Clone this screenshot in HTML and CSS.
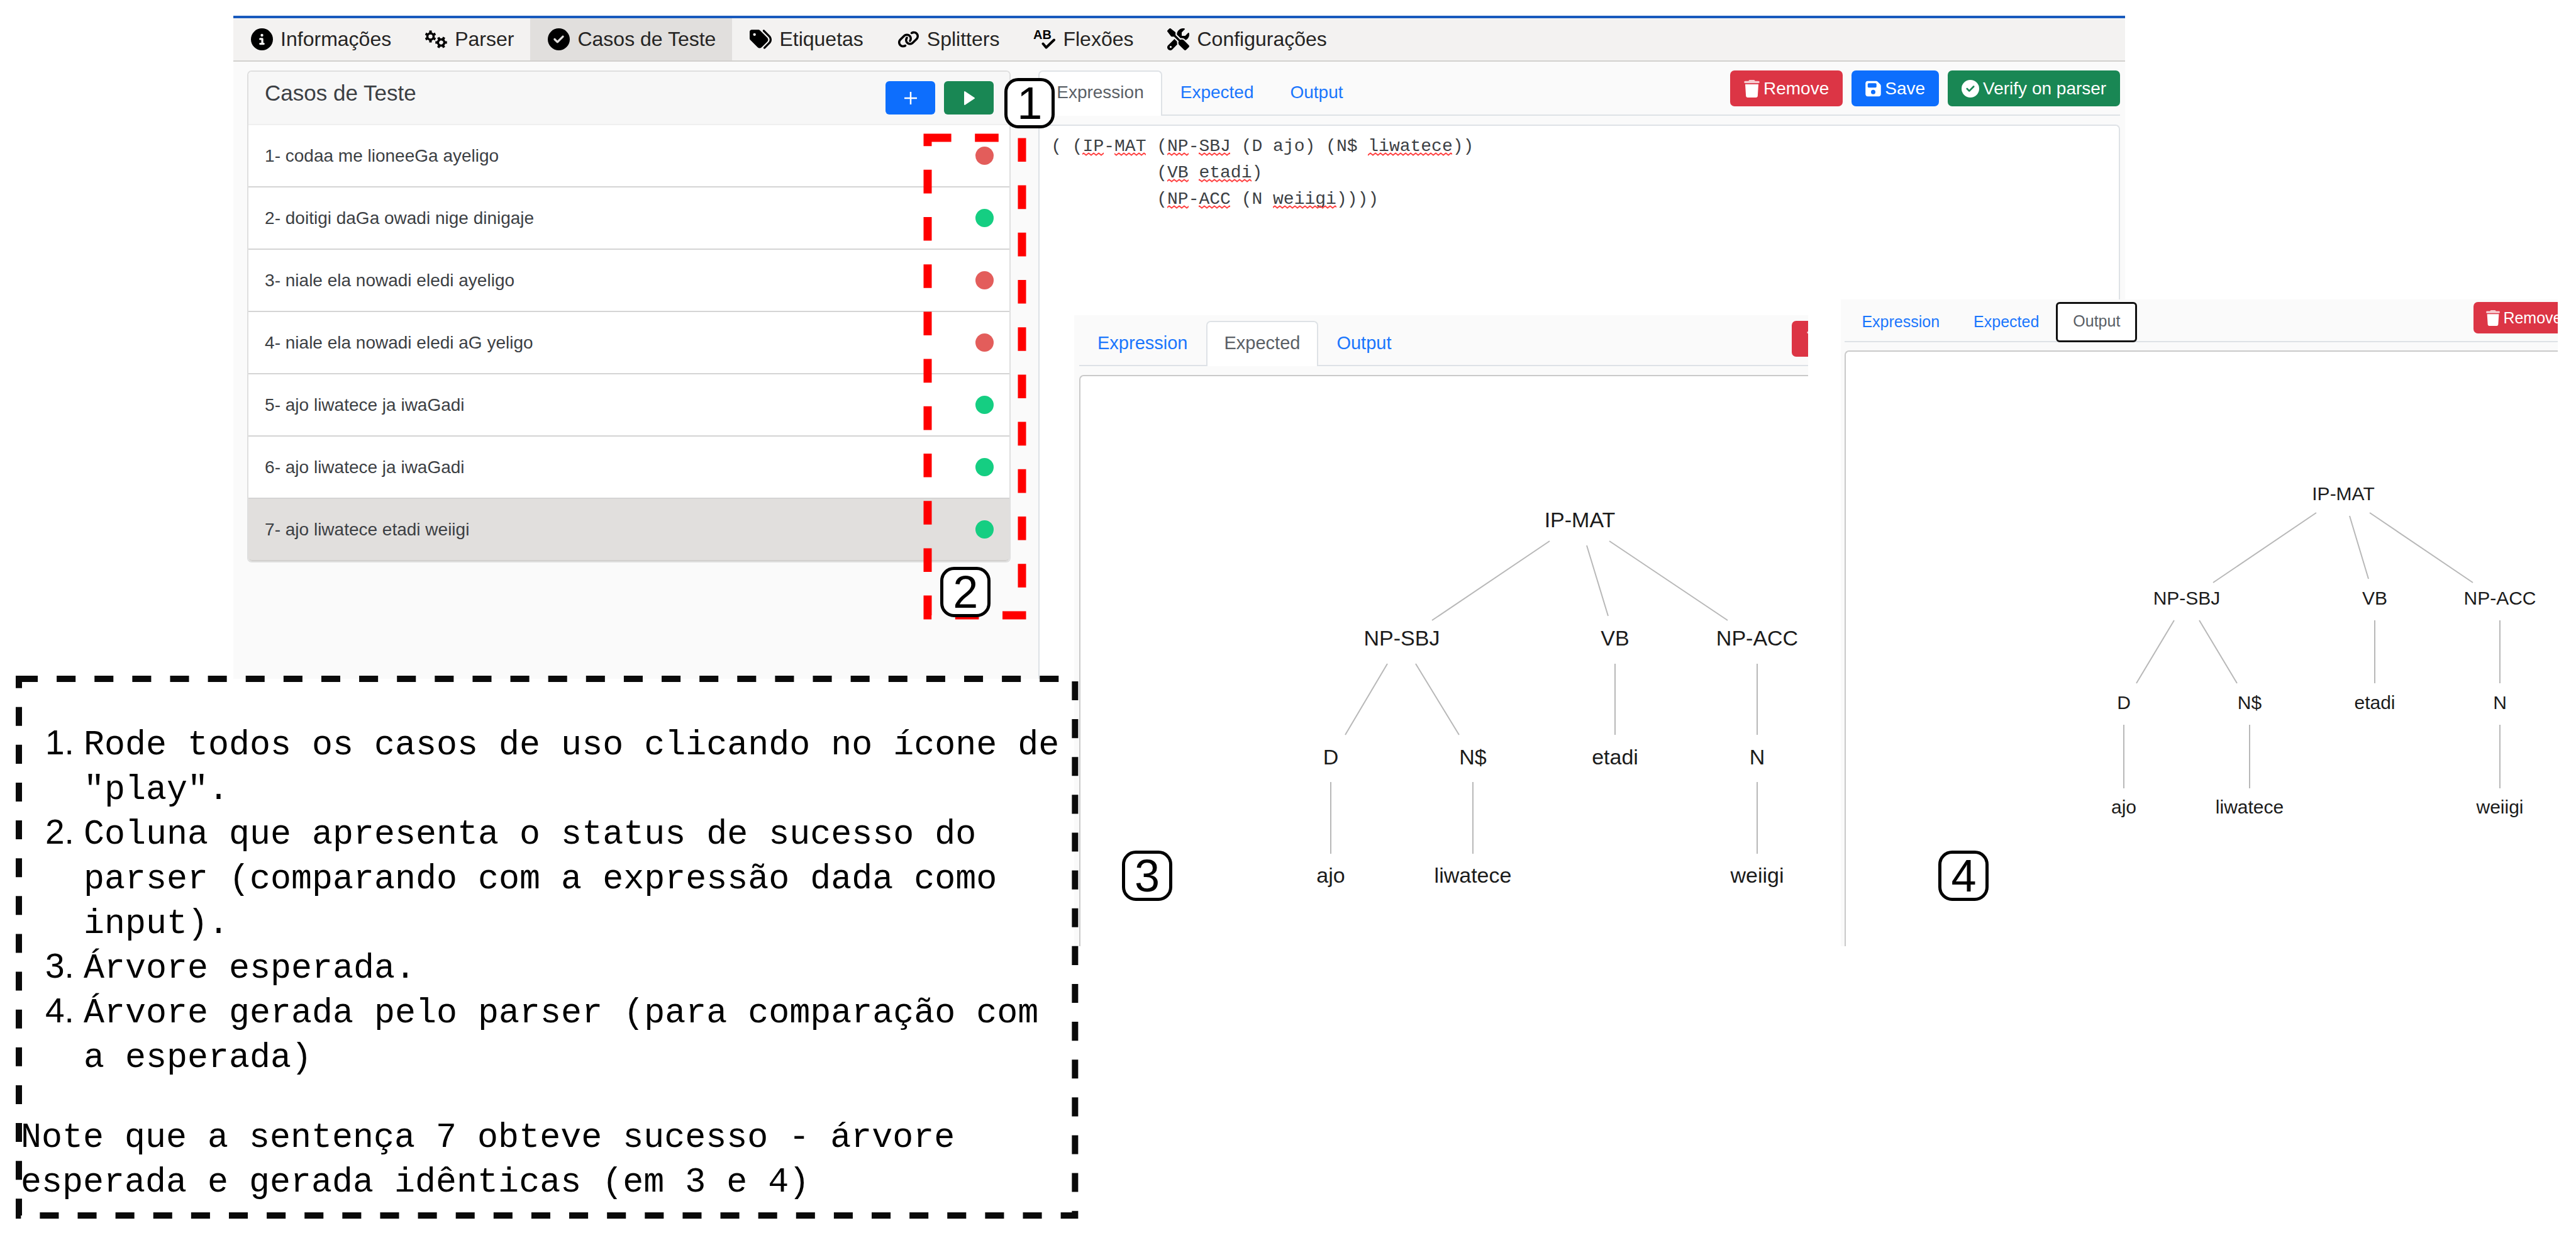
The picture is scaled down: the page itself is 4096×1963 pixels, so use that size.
FILE: index.html
```html
<!DOCTYPE html>
<html lang="pt-BR">
<head>
<meta charset="utf-8">
<meta name="viewport" content="width=device-width, initial-scale=1">
<title>Casos de Teste</title>
<link rel="stylesheet" href="styles.css">
</head>
<body>
<svg class="sprite" width="0" height="0" aria-hidden="true">
  <symbol id="i-info" viewBox="0 0 512 512"><path d="M256 512A256 256 0 1 0 256 0a256 256 0 1 0 0 512zM216 336h24V272H216c-13.3 0-24-10.7-24-24s10.7-24 24-24h48c13.3 0 24 10.7 24 24v88h8c13.3 0 24 10.7 24 24s-10.7 24-24 24H216c-13.3 0-24-10.7-24-24s10.7-24 24-24zm40-208a32 32 0 1 1 0 64 32 32 0 1 1 0-64z"/></symbol>
  <symbol id="i-check" viewBox="0 0 512 512"><path d="M256 512A256 256 0 1 0 256 0a256 256 0 1 0 0 512zM369 209L241 337c-9.4 9.4-24.6 9.4-33.9 0l-64-64c-9.4-9.4-9.4-24.6 0-33.9s24.6-9.4 33.9 0l47 47L335 175c9.4-9.4 24.6-9.4 33.9 0s9.4 24.6 0 33.9z"/></symbol>
  <symbol id="i-tags" viewBox="0 0 512 512"><path d="M345 39.1L472.8 168.4c52.4 53 52.4 138.2 0 191.2L360.8 472.9c-9.3 9.4-24.5 9.5-33.9 .2s-9.5-24.5-.2-33.9L438.6 325.9c33.9-34.3 33.9-89.4 0-123.7L310.9 72.9c-9.3-9.4-9.2-24.6 .2-33.9s24.6-9.2 33.9 .2zM0 229.5V80C0 53.5 21.5 32 48 32H197.5c17 0 33.3 6.7 45.3 18.7l168 168c25 25 25 65.5 0 90.5L277.3 442.7c-25 25-65.5 25-90.5 0l-168-168C6.7 262.7 0 246.5 0 229.5zM144 144a32 32 0 1 0 -64 0 32 32 0 1 0 64 0z"/></symbol>
  <symbol id="i-link" viewBox="0 0 640 512"><path d="M579.8 267.7c56.5-56.5 56.5-148 0-204.5c-50-50-128.8-56.5-186.3-15.4l-1.6 1.1c-14.4 10.3-17.7 30.3-7.4 44.6s30.3 17.7 44.6 7.4l1.6-1.1c32.1-22.9 76-19.3 103.8 8.6c31.5 31.5 31.5 82.5 0 114L422.3 334.8c-31.5 31.5-82.5 31.5-114 0c-27.9-27.9-31.5-71.8-8.6-103.8l1.1-1.6c10.3-14.4 6.9-34.4-7.4-44.6s-34.4-6.9-44.6 7.4l-1.1 1.6C206.5 251.2 213 330 263 380c56.5 56.5 148 56.5 204.5 0L579.8 267.7zM60.2 244.3c-56.5 56.5-56.5 148 0 204.5c50 50 128.8 56.5 186.3 15.4l1.6-1.1c14.4-10.3 17.7-30.3 7.4-44.6s-30.3-17.7-44.6-7.4l-1.6 1.1c-32.1 22.9-76 19.3-103.8-8.6C74 372 74 321 105.5 289.5L217.7 177.2c31.5-31.5 82.5-31.5 114 0c27.9 27.9 31.5 71.8 8.6 103.9l-1.1 1.6c-10.3 14.4-6.9 34.4 7.4 44.6s34.4 6.9 44.6-7.4l1.1-1.6C433.5 260.8 427 182 377 132c-56.5-56.5-148-56.5-204.5 0L60.2 244.3z"/></symbol>
  <symbol id="i-tools" viewBox="0 0 512 512"><path d="M78.6 5C69.1-2.4 55.6-1.5 47 7L7 47c-8.5 8.5-9.4 22-2.1 31.6l80 104c4.5 5.9 11.6 9.4 19 9.4h54.1l109 109c-14.7 29-10 65.4 14.3 89.6l112 112c12.5 12.5 32.8 12.5 45.3 0l64-64c12.5-12.5 12.5-32.8 0-45.3l-112-112c-24.2-24.2-60.6-29-89.6-14.3l-109-109V104c0-7.5-3.5-14.5-9.4-19L78.6 5zM19.9 396.1C7.2 408.8 0 426.1 0 444.1C0 481.6 30.4 512 67.9 512c18 0 35.3-7.2 48-19.9L233.7 374.3c-7.8-20.9-9-43.6-3.6-65.1l-61.7-61.7L19.9 396.1zM512 144c0-10.5-1.1-20.7-3.2-30.5c-2.4-11.2-16.1-14.1-24.2-6l-63.9 63.9c-3 3-7.1 4.7-11.3 4.7H352c-8.8 0-16-7.2-16-16V102.6c0-4.2 1.7-8.3 4.7-11.3l63.9-63.9c8.1-8.1 5.2-21.8-6-24.2C388.7 1.1 378.5 0 368 0C288.5 0 224 64.5 224 144l0 .8 85.3 85.3c36-9.1 75.8 .5 104 28.7L429 274.5c49-23 83-72.8 83-130.5zM56 432a24 24 0 1 1 48 0 24 24 0 1 1 -48 0z"/></symbol>
  <symbol id="i-trash" viewBox="0 0 448 512"><path d="M135.2 17.7L128 32H32C14.3 32 0 46.3 0 64S14.3 96 32 96H416c17.7 0 32-14.3 32-32s-14.3-32-32-32H320l-7.2-14.3C307.4 6.8 296.3 0 284.2 0H163.8c-12.1 0-23.2 6.8-28.6 17.7z" opacity=".75"/><path d="M416 128H32L53.2 467c1.6 25.3 22.6 45 47.9 45H346.9c25.3 0 46.3-19.7 47.9-45L416 128z"/></symbol>
  <symbol id="i-save" viewBox="0 0 448 512"><path d="M64 32C28.7 32 0 60.7 0 96V416c0 35.3 28.7 64 64 64H384c35.3 0 64-28.7 64-64V173.3c0-17-6.7-33.3-18.7-45.3L352 50.7C340 38.7 323.7 32 306.7 32H64zm0 96c0-17.7 14.3-32 32-32H288c17.7 0 32 14.3 32 32v64c0 17.7-14.3 32-32 32H96c-17.7 0-32-14.3-32-32V128zM224 288a64 64 0 1 1 0 128 64 64 0 1 1 0-128z"/></symbol>
</svg>

<main class="board">
  <section class="app">
    <nav class="menu">
      <a class="menu-item" href="#info"><svg class="icon"><use href="#i-info"/></svg>Informações</a>
      <a class="menu-item" href="#parser">
        <svg class="icon" viewBox="0 0 35 35">
          <g fill="none" stroke="#000">
            <g transform="translate(8.5 13)"><circle r="5" stroke-width="3.6"/><path stroke-width="4" d="M0-5.5V-9.5M0 5.5V9.5M4.8-2.8L7.8-4.5M-4.8-2.8L-7.8-4.5M4.8 2.8L7.8 4.5M-4.8 2.8L-7.8 4.5"/></g>
            <g transform="translate(25.5 22.5) rotate(30)"><circle r="5" stroke-width="3.6"/><path stroke-width="4" d="M0-5.5V-9.5M0 5.5V9.5M4.8-2.8L8-4.6M-4.8-2.8L-8-4.6M4.8 2.8L8 4.6M-4.8 2.8L-8 4.6"/></g>
          </g>
        </svg>Parser</a>
      <a class="menu-item is-active" href="#casos" aria-current="page"><svg class="icon"><use href="#i-check"/></svg>Casos de Teste</a>
      <a class="menu-item" href="#etiquetas"><svg class="icon"><use href="#i-tags"/></svg>Etiquetas</a>
      <a class="menu-item" href="#splitters"><svg class="icon"><use href="#i-link"/></svg>Splitters</a>
      <a class="menu-item" href="#flexoes">
        <svg class="icon" viewBox="0 0 35 35" aria-hidden="true">
          <text class="spell-letters" x="0" y="17">AB</text>
          <path d="M15.500 24.500L20.500 30.500L33 18.500" fill="none" stroke="#000" stroke-width="4" stroke-linecap="round" stroke-linejoin="round"/>
        </svg>Flexões</a>
      <a class="menu-item" href="#config"><svg class="icon"><use href="#i-tools"/></svg>Configurações</a>
    </nav>

    <div class="columns">
      <section class="cases">
        <header class="cases-head">
          <h1 class="cases-title">Casos de Teste</h1>
          <div class="cases-actions">
            <button class="square blue" type="button" aria-label="Adicionar"><svg width="22" height="22" viewBox="0 0 22 22"><path d="M11 1V21M1 11H21" stroke="#fff" stroke-width="2.500"/></svg></button>
            <button class="square green" type="button" aria-label="Executar todos"><svg width="22" height="24" viewBox="0 0 22 24"><path d="M4 2L19 12L4 22Z" fill="#fff" stroke="#fff" stroke-width="2" stroke-linejoin="round"/></svg></button>
          </div>
        </header>
        <ul class="case-list">
          <li><button class="case" type="button">1- codaa me lioneeGa ayeligo<span class="dot fail"></span></button></li>
          <li><button class="case" type="button">2- doitigi daGa owadi nige dinigaje<span class="dot"></span></button></li>
          <li><button class="case" type="button">3- niale ela nowadi eledi ayeligo<span class="dot fail"></span></button></li>
          <li><button class="case" type="button">4- niale ela nowadi eledi aG yeligo<span class="dot fail"></span></button></li>
          <li><button class="case" type="button">5- ajo liwatece ja iwaGadi<span class="dot"></span></button></li>
          <li><button class="case" type="button">6- ajo liwatece ja iwaGadi<span class="dot"></span></button></li>
          <li><button class="case is-active" type="button">7- ajo liwatece etadi weiigi<span class="dot"></span></button></li>
        </ul>
        <svg class="status-frame" aria-hidden="true"><rect width="100%" height="100%"/></svg>
        <span class="badge badge-1">1</span>
        <span class="badge badge-2">2</span>
      </section>

      <section class="editor">
        <header class="bar">
          <div class="tabs">
            <button class="tab is-active" type="button">Expression</button>
            <button class="tab" type="button">Expected</button>
            <button class="tab" type="button">Output</button>
          </div>
          <div class="actions">
            <button class="btn red" type="button"><svg class="btn-icon narrow"><use href="#i-trash"/></svg>Remove</button>
            <button class="btn blue" type="button"><svg class="btn-icon narrow"><use href="#i-save"/></svg>Save</button>
            <button class="btn green" type="button"><svg class="btn-icon"><use href="#i-check"/></svg>Verify on parser</button>
          </div>
        </header>
        <div class="code">
          <textarea class="code-text" aria-label="Expression" spellcheck="false">( (IP-MAT (NP-SBJ (D ajo) (N$ liwatece))
          (VB etadi)
          (NP-ACC (N weiigi))))</textarea>
          <svg class="spelling" width="680" height="126" aria-hidden="true">
            <defs><pattern id="wave" width="8" height="6" patternUnits="userSpaceOnUse"><path d="M-1 5.500L0 4.500L4 1.500L8 4.500L9 5.500" fill="none" stroke="#ff4040" stroke-width="2"/></pattern></defs>
            <g fill="url(#wave)">
              <rect x="50" y="30" width="34" height="6"/><rect x="101" y="30" width="50" height="6"/>
              <rect x="185" y="30" width="34" height="6"/><rect x="235" y="30" width="50" height="6"/>
              <rect x="504" y="30" width="134" height="6"/>
              <rect x="185" y="72" width="34" height="6"/><rect x="235" y="72" width="84" height="6"/>
              <rect x="185" y="114" width="34" height="6"/><rect x="235" y="114" width="50" height="6"/><rect x="353" y="114" width="101" height="6"/>
            </g>
          </svg>
        </div>
      </section>
    </div>
  </section>

  <section class="panel panel-expected">
    <header class="bar">
      <div class="tabs">
        <button class="tab" type="button">Expression</button>
        <button class="tab is-active" type="button">Expected</button>
        <button class="tab" type="button">Output</button>
      </div>
      <button class="btn red" type="button" aria-label="Remove"><svg class="btn-icon narrow"><use href="#i-trash"/></svg></button>
    </header>
    <div class="tree-card">
      <svg class="tree" width="1160" height="906">
        <path class="edges" d="M746 262L559 388M805 269L839 381M841 262L1029 388M488 457L421 570M533 457L602 570M850 457V570M1076 457V570M398 645V759M624 645V759M1076 645V759"/>
        <g class="labels">
          <text x="794" y="240">IP-MAT</text>
          <text x="511" y="428">NP-SBJ</text><text x="850" y="428">VB</text><text x="1076" y="428">NP-ACC</text>
          <text x="398" y="617">D</text><text x="624" y="617">N$</text><text x="850" y="617">etadi</text><text x="1076" y="617">N</text>
          <text x="398" y="805">ajo</text><text x="624" y="805">liwatece</text><text x="1076" y="805">weiigi</text>
        </g>
      </svg>
    </div>
    <span class="badge badge-3">3</span>
  </section>

  <section class="panel panel-output">
    <header class="bar">
      <div class="tabs">
        <button class="tab" type="button">Expression</button>
        <button class="tab" type="button">Expected</button>
        <button class="tab is-active is-focused" type="button">Output</button>
      </div>
      <button class="btn red" type="button"><svg class="btn-icon narrow"><use href="#i-trash"/></svg>Remove</button>
    </header>
    <div class="tree-card">
      <svg class="tree" width="1130" height="945">
        <path class="edges" d="M748 256L584 367M801 261L831 361M833 256L997 367M522 427L462 527M562 427L622 527M841 427V527M1040 427V527M442 593V694M642 593V694M1040 593V694"/>
        <g class="labels">
          <text x="791" y="236">IP-MAT</text>
          <text x="542" y="402">NP-SBJ</text><text x="841" y="402">VB</text><text x="1040" y="402">NP-ACC</text>
          <text x="442" y="568">D</text><text x="642" y="568">N$</text><text x="841" y="568">etadi</text><text x="1040" y="568">N</text>
          <text x="442" y="734">ajo</text><text x="642" y="734">liwatece</text><text x="1040" y="734">weiigi</text>
        </g>
      </svg>
    </div>
    <span class="badge badge-4">4</span>
  </section>

  <section class="notes">
    <svg class="notes-frame" aria-hidden="true"><rect width="100%" height="100%"/></svg>
    <ol class="notes-list">
      <li>Rode todos os casos de uso clicando no ícone de "play".</li>
      <li>Coluna que apresenta o status de sucesso do parser (comparando com a expressão dada como input).</li>
      <li>Árvore esperada.</li>
      <li>Árvore gerada pelo parser (para comparação com a esperada)</li>
    </ol>
    <p class="notes-text">Note que a sentença 7 obteve sucesso - árvore esperada e gerada idênticas (em 3 e 4)</p>
  </section>
</main>
</body>
</html>
```
FILE: styles.css
```css
*, *::before, *::after { box-sizing: border-box; }

body {
  margin: 0;
  background: #fff;
  font-family: "Liberation Sans", Arial, sans-serif;
  color: #212529;
}

button, textarea { font: inherit; color: inherit; margin: 0; }
button { border: 0; background: none; padding: 0; }
.sprite { position: absolute; }

.board { position: relative; padding: 25px 0; }

/* Main application window */
.app {
  margin: 0 17.5% 0 9.06%;
  border-top: 4px solid #185abd;
  background: #fafafa;
}

.menu {
  display: flex;
  height: 69px;
  background: #f3f2f1;
  border-bottom: 2px solid #d2d0ce;
}
.menu-item {
  display: flex;
  align-items: center;
  gap: 12px;
  padding: 0 26px 1px 28px;
  font-size: 32px;
  line-height: 36px;
  color: #252423;
  text-decoration: none;
}
.menu-item.is-active { background: #e1dfdd; }
.icon { width: 35px; height: 35px; fill: #000; }
.spell-letters { font: bold 20px "Liberation Sans", Arial, sans-serif; }

.columns {
  display: grid;
  grid-template-columns: 12fr 17fr;
  gap: 44px;
  padding: 14px 8px 0 22px;
}

/* List of test cases */
.cases {
  position: relative;
  z-index: 1;
  align-self: start;
  border: 2px solid #dfdfdf;
  border-radius: 7px;
  background: #fff;
}
.cases-head {
  display: flex;
  justify-content: space-between;
  align-items: center;
  height: 85px;
  padding: 0 25px 0 26px;
  border-bottom: 2px solid #efefef;
  border-radius: 6px 6px 0 0;
  background: #f7f7f7;
}
.cases-title {
  align-self: flex-start;
  margin: 0;
  font-size: 35px;
  font-weight: 400;
  line-height: 68px;
  color: #3c4044;
}
.cases-actions { display: flex; gap: 14px; }
.square {
  display: grid;
  place-items: center;
  width: 79px;
  height: 53px;
  border-radius: 6px;
}
.blue { background: #0d6efd; }
.green { background: #198754; }
.red { background: #dc3545; }

.case-list { margin: 0; padding: 0; list-style: none; }
.case {
  display: flex;
  justify-content: space-between;
  align-items: center;
  width: 100%;
  height: 99px;
  padding: 0 25px 0 26px;
  border-bottom: 2px solid #d4d4d4;
  font-size: 28px;
  line-height: 42px;
  color: #3c4044;
}
.case.is-active {
  border-bottom-color: #d2d0ce;
  border-radius: 0 0 6px 6px;
  background: #e1dfdd;
}
.dot { width: 29px; height: 29px; border-radius: 50%; background: #15ce82; }
.dot.fail { background: #e35d5b; }

/* Tabs and actions */
.bar {
  display: flex;
  justify-content: space-between;
  align-items: flex-start;
  border-bottom: 2px solid #dee2e6;
}
.tabs { display: flex; }
.tab {
  margin-bottom: -2px;
  padding: 12px 27px 16px;
  border: 2px solid transparent;
  border-bottom: 0;
  border-radius: 7px 7px 0 0;
  font-size: 28px;
  line-height: 42px;
  color: #1a76fd;
}
.tab.is-active { border-color: #dee2e6; background: #fff; color: #5a6066; }
.actions { display: flex; gap: 14px; }
.btn {
  display: flex;
  align-items: center;
  gap: 6px;
  height: 57px;
  padding: 0 22px;
  border-radius: 7px;
  font-size: 28px;
  line-height: 42px;
  color: #fff;
}
.btn-icon { width: 28px; height: 28px; fill: #fff; }
.btn-icon.narrow { width: 25px; }

/* Expression text */
.code { position: relative; margin-top: 14px; }
.code-text {
  display: block;
  width: 100%;
  height: 881px;
  padding: 12px 18px;
  border: 2px solid #dee2e6;
  border-bottom: 0;
  border-radius: 7px 7px 0 0;
  background: #fff;
  font-family: "Liberation Mono", "Courier New", monospace;
  font-size: 28px;
  line-height: 42px;
  color: #3c4044;
  resize: none;
  overflow: hidden;
  white-space: pre;
}
.spelling { position: absolute; top: 14px; left: 20px; pointer-events: none; }

/* Cut-outs with the syntax trees */
.panel {
  position: absolute;
  overflow: hidden;
  background: #fafafa;
}
.panel .tree-card {
  margin-top: 14px;
  border: solid #c9c9c9;
  border-width: 2px 0 0 2px;
  border-radius: 7px 0 0 0;
  background: #fff;
  overflow: hidden;
}
.tree { display: block; }
.edges { fill: none; stroke: #b8b8b8; stroke-width: 2; }
.labels { fill: #1b1b1b; text-anchor: middle; }

.panel-expected {
  top: 501px;
  left: 41.7%;
  width: 28.5%;
  padding: 9px 0 0 8px;
}
.panel-expected .bar { margin-right: -47px; }
.panel-expected .tab { font-size: 29px; }
.panel-expected .btn { padding: 0 24px; }
.panel-expected .labels { font-size: 34px; }

.panel-output {
  top: 476px;
  left: 71.47%;
  width: 27.81%;
  padding: 4px 0 0 6px;
}
.panel-output .bar { margin-right: -27px; }
.panel-output .tree-card { margin-top: 13px; }
.panel-output .tab {
  padding: 10px 25px 14px;
  font-size: 25px;
  line-height: 37px;
}
.panel-output .tab.is-focused {
  border: 3px solid #101010;
  border-radius: 6px;
  padding: 9px 24px 12px;
}
.panel-output .btn {
  gap: 5px;
  height: 50px;
  padding: 0 20px;
  font-size: 25px;
  line-height: 37px;
}
.panel-output .btn-icon { width: 22px; height: 25px; }
.panel-output .labels { font-size: 30px; }

/* Numbered marks */
.badge {
  position: absolute;
  display: grid;
  place-items: center;
  width: 80px;
  height: 80px;
  border: 5px solid #000;
  border-radius: 22px;
  background: #fff;
  font-size: 72px;
  line-height: 70px;
  color: #000;
}
.badge-1 { top: 10px; right: -72px; }
.badge-2 { top: 787px; right: 30px; }
.badge-3 { top: 851px; left: 76px; }
.badge-4 { top: 876px; left: 155px; }

.status-frame {
  position: absolute;
  top: 105px;
  right: -20px;
  width: 150px;
  height: 759px;
  overflow: visible;
  fill: none;
  stroke: #f00;
  stroke-width: 13;
  stroke-dasharray: 37.6;
  pointer-events: none;
}

/* Explanatory notes */
.notes {
  position: relative;
  z-index: 1;
  width: 41%;
  margin-left: 30px;
  padding: 70px 0 17px;
  font-family: "Liberation Mono", "Courier New", monospace;
  font-size: 55px;
  line-height: 71px;
  color: #000;
}
.notes-frame {
  position: absolute;
  inset: 0;
  width: 100%;
  height: 100%;
  overflow: visible;
  fill: none;
  stroke: #0a0a0a;
  stroke-width: 10;
  stroke-dasharray: 30.06;
}
.notes-list {
  margin: 0;
  padding: 0 0 0 42px;
  list-style: none;
  counter-reset: note;
}
.notes-list li {
  display: grid;
  grid-template-columns: 61px 1fr;
  counter-increment: note;
}
.notes-list li::before {
  content: counter(note) ".";
  font-family: "Liberation Sans", Arial, sans-serif;
  line-height: 62px;
}
.notes-text { margin: 56px 0 0; padding-left: 3px; }
```
